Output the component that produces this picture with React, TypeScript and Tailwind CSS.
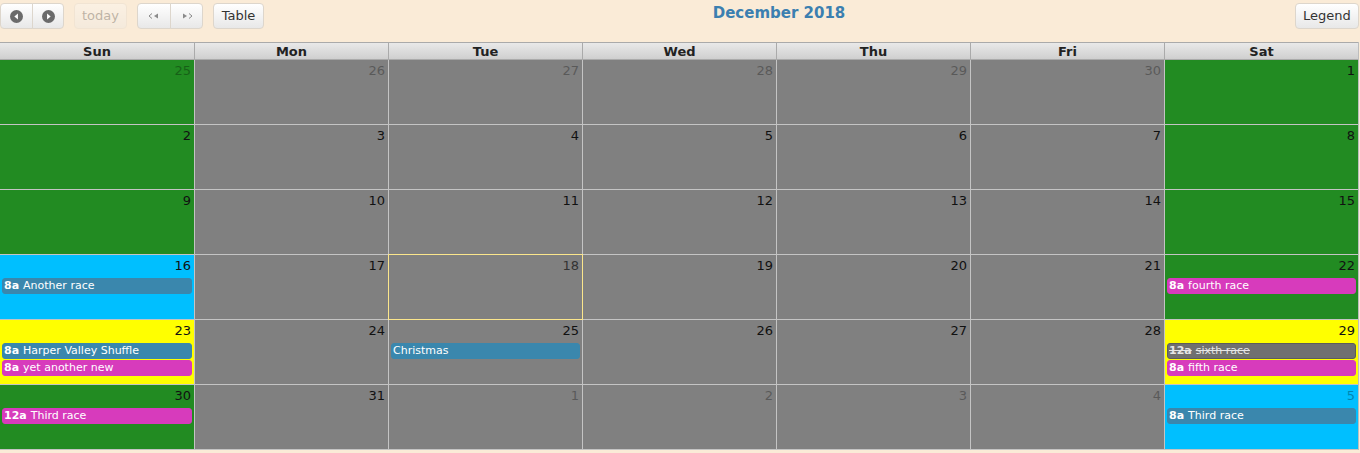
import React from "react"

type Ev = { time?: string; title: string; color: string; strike?: boolean }
type Day = { n: number; other?: boolean; bg: string; today?: boolean; events?: Ev[] }

const GREEN = "bg-[#228b22]"
const GRAY = "bg-[#808080]"
const SKY = "bg-[#00bfff]"
const YELLOW = "bg-[#ffff00]"

const BLUE_EV = "bg-[#3a87ad] border-[#3a87ad]"
const PINK_EV = "bg-[#d73bbc] border-[#d73bbc]"
const GRAY_EV = "bg-[#707070] border-[#5c5c5c]"

const weeks: Day[][] = [
  [
    { n: 25, other: true, bg: GREEN },
    { n: 26, other: true, bg: GRAY },
    { n: 27, other: true, bg: GRAY },
    { n: 28, other: true, bg: GRAY },
    { n: 29, other: true, bg: GRAY },
    { n: 30, other: true, bg: GRAY },
    { n: 1, bg: GREEN },
  ],
  [
    { n: 2, bg: GREEN },
    { n: 3, bg: GRAY },
    { n: 4, bg: GRAY },
    { n: 5, bg: GRAY },
    { n: 6, bg: GRAY },
    { n: 7, bg: GRAY },
    { n: 8, bg: GREEN },
  ],
  [
    { n: 9, bg: GREEN },
    { n: 10, bg: GRAY },
    { n: 11, bg: GRAY },
    { n: 12, bg: GRAY },
    { n: 13, bg: GRAY },
    { n: 14, bg: GRAY },
    { n: 15, bg: GREEN },
  ],
  [
    { n: 16, bg: SKY, events: [{ time: "8a", title: "Another race", color: BLUE_EV }] },
    { n: 17, bg: GRAY },
    { n: 18, bg: GRAY, today: true },
    { n: 19, bg: GRAY },
    { n: 20, bg: GRAY },
    { n: 21, bg: GRAY },
    { n: 22, bg: GREEN, events: [{ time: "8a", title: "fourth race", color: PINK_EV }] },
  ],
  [
    {
      n: 23,
      bg: YELLOW,
      events: [
        { time: "8a", title: "Harper Valley Shuffle", color: BLUE_EV },
        { time: "8a", title: "yet another new", color: PINK_EV },
      ],
    },
    { n: 24, bg: GRAY },
    { n: 25, bg: GRAY, events: [{ title: "Christmas", color: BLUE_EV }] },
    { n: 26, bg: GRAY },
    { n: 27, bg: GRAY },
    { n: 28, bg: GRAY },
    {
      n: 29,
      bg: YELLOW,
      events: [
        { time: "12a", title: "sixth race", color: GRAY_EV, strike: true },
        { time: "8a", title: "fifth race", color: PINK_EV },
      ],
    },
  ],
  [
    { n: 30, bg: GREEN, events: [{ time: "12a", title: "Third race", color: PINK_EV }] },
    { n: 31, bg: GRAY },
    { n: 1, other: true, bg: GRAY },
    { n: 2, other: true, bg: GRAY },
    { n: 3, other: true, bg: GRAY },
    { n: 4, other: true, bg: GRAY },
    { n: 5, other: true, bg: SKY, events: [{ time: "8a", title: "Third race", color: BLUE_EV }] },
  ],
]

const dayNames = ["Sun", "Mon", "Tue", "Wed", "Thu", "Fri", "Sat"]

function CircleArrow({ dir }: { dir: "left" | "right" }) {
  return (
    <svg width="13" height="13" viewBox="0 0 12 12">
      <circle cx="6" cy="6" r="6" fill="#6b6b6b" />
      {dir === "left" ? (
        <path d="M7.3 3.2 L4 6 L7.3 8.8 Z" fill="#fff" />
      ) : (
        <path d="M4.7 3.2 L8 6 L4.7 8.8 Z" fill="#fff" />
      )}
    </svg>
  )
}

function DoubleArrow({ dir }: { dir: "left" | "right" }) {
  return (
    <svg width="12" height="8" viewBox="0 0 12 8">
      {dir === "left" ? (
        <>
          <path d="M4 1.5 L1 4 L4 6.5" fill="none" stroke="#8a8a8a" strokeWidth="1" />
          <path d="M10 1.5 L6 4 L10 6.5 Z" fill="#8a8a8a" />
        </>
      ) : (
        <>
          <path d="M2 1.5 L6 4 L2 6.5 Z" fill="#8a8a8a" />
          <path d="M8 1.5 L11 4 L8 6.5" fill="none" stroke="#8a8a8a" strokeWidth="1" />
        </>
      )}
    </svg>
  )
}

const btn =
  "flex h-[26px] items-center justify-center border border-[#ddd6cc] bg-gradient-to-b from-[#ffffff] to-[#e8e8e8] text-[13px] text-[#333]"

export default function App() {
  return (
    <div
      className="min-h-[453px] w-[1360px] bg-[#faebd7] text-[13px]"
      style={{ fontFamily: '"DejaVu Sans", Verdana, sans-serif' }}
    >
      {/* Toolbar */}
      <div className="relative flex h-[42px] items-start justify-between pt-[3px]">
        <div className="flex items-center gap-[10px]">
          <div className="flex">
            <button type="button" className={`${btn} w-[33px] rounded-l-[4px]`}>
              <CircleArrow dir="left" />
            </button>
            <button type="button" className={`${btn} -ml-px w-[32px] rounded-r-[4px]`}>
              <CircleArrow dir="right" />
            </button>
          </div>
          <button type="button" className={`${btn} w-[53px] rounded-[4px] opacity-30`}>
            today
          </button>
          <div className="flex">
            <button type="button" className={`${btn} w-[34px] rounded-l-[4px]`}>
              <DoubleArrow dir="left" />
            </button>
            <button type="button" className={`${btn} -ml-px w-[33px] rounded-r-[4px]`}>
              <DoubleArrow dir="right" />
            </button>
          </div>
          <button type="button" className={`${btn} w-[51px] rounded-[4px]`}>
            Table
          </button>
        </div>
        <h2 className="absolute left-0 right-0 top-[3px] pl-[198px] text-center text-[15px] font-bold leading-[20px] text-[#3b7fb0]">
          December 2018
        </h2>
        <button type="button" className={`${btn} mr-px w-[64px] rounded-[4px]`}>
          Legend
        </button>
      </div>

      {/* Calendar grid */}
      <div className="w-[1359px] border-r border-[#bdbdbd]">
        <div className="grid grid-cols-7 border-t border-[#aaa]">
          {dayNames.map((d, i) => (
            <div
              key={d}
              className={`h-[17px] border-b border-[#aaa] bg-gradient-to-b from-[#e9e9e9] to-[#cfcfcf] text-center text-[13px] font-bold leading-[17px] text-[#222] ${
                i === 0 ? "" : "border-l"
              }`}
            >
              {d}
            </div>
          ))}
        </div>
        {weeks.map((week, wi) => (
          <div key={wi} className="grid grid-cols-7">
            {week.map((day, di) => (
              <div
                key={di}
                className={`relative h-[65px] border-b border-[#c4c4c4] ${di === 0 ? "" : "border-l"} ${day.bg}`}
              >
                {day.today && (
                  <div className="pointer-events-none absolute -bottom-px -left-px -right-px -top-px z-10 border border-[#fbe68c]" />
                )}
                <div
                  className={`h-[23px] pr-[3px] pt-[2px] text-right text-[13px] leading-[17px] ${
                    day.other ? "text-black opacity-30" : day.today ? "text-[#333]" : "text-[#111]"
                  }`}
                >
                  {day.n}
                </div>
                {day.events?.map((ev, ei) => (
                  <div
                    key={ei}
                    className={`mx-[2px] mb-px flex h-[16px] items-center truncate rounded-[3px] border px-[1px] text-[11px] leading-[14px] ${ev.color} ${
                      ev.strike ? "text-[#e6e6e6]" : "text-white"
                    }`}
                  >
                    {ev.time && (
                      <span className={`mr-[4px] font-bold ${ev.strike ? "line-through" : ""}`}>
                        {ev.time}
                      </span>
                    )}
                    <span className={ev.strike ? "line-through" : ""}>{ev.title}</span>
                  </div>
                ))}
              </div>
            ))}
          </div>
        ))}
      </div>
    </div>
  )
}
